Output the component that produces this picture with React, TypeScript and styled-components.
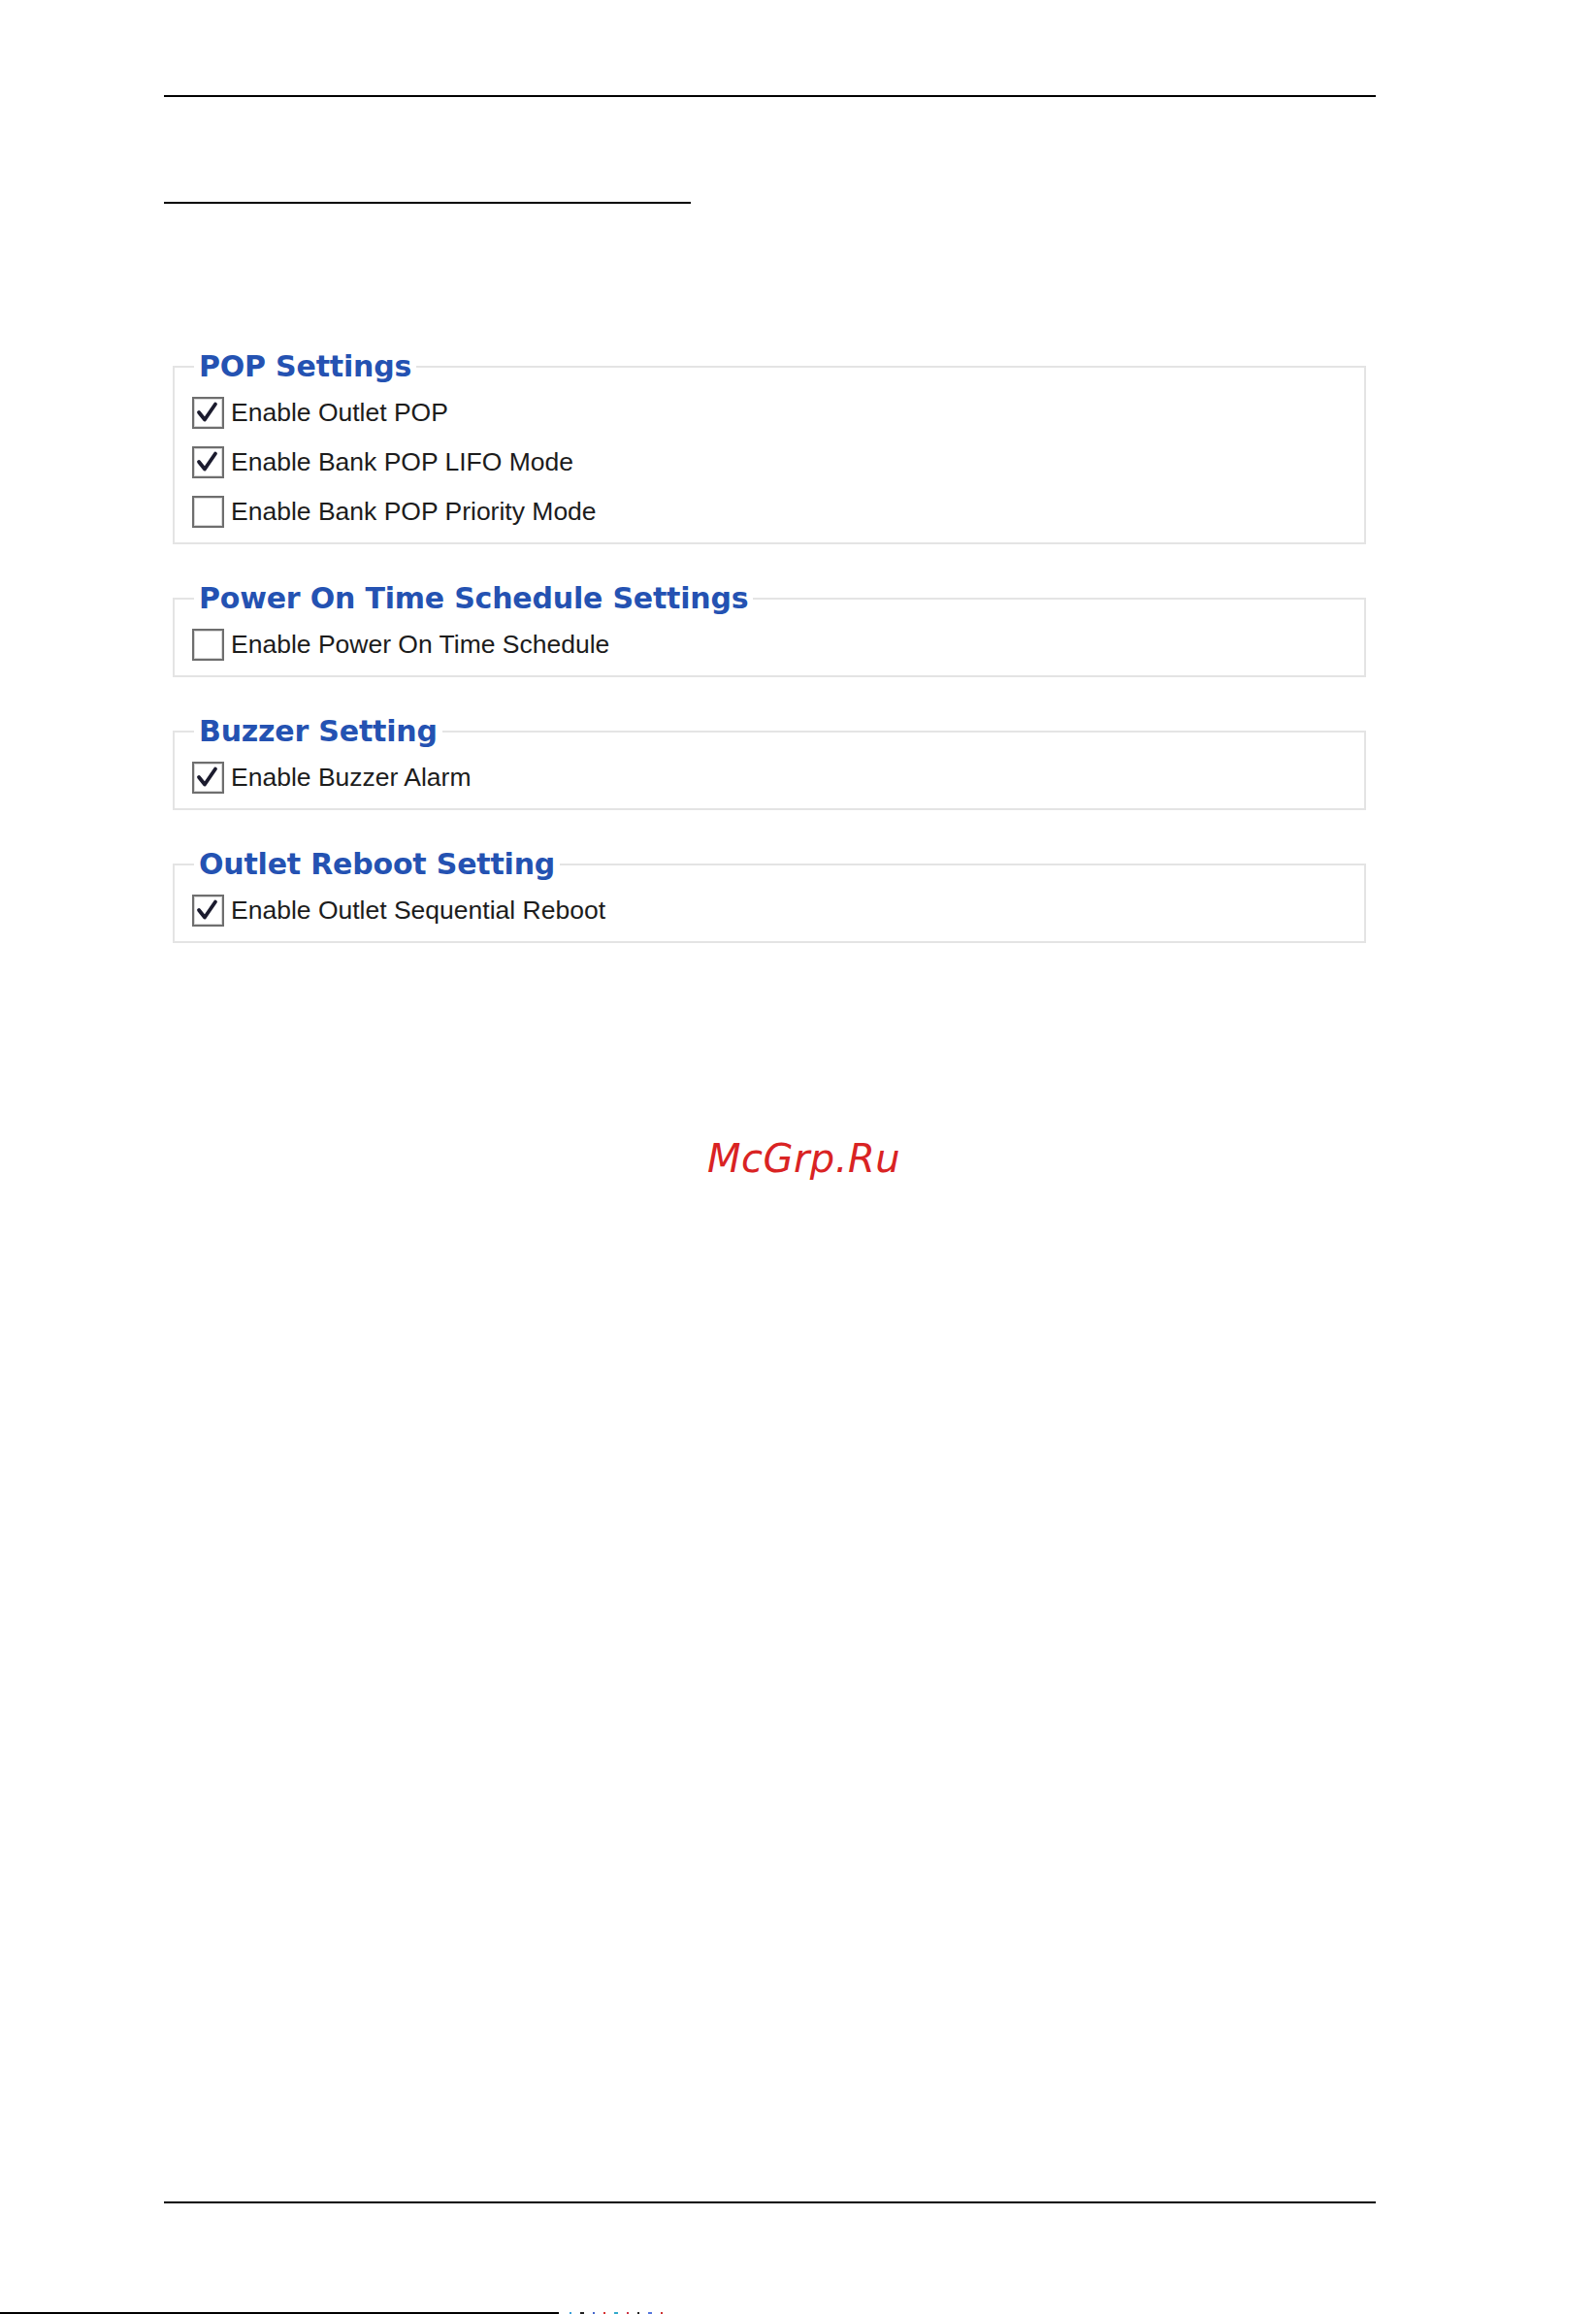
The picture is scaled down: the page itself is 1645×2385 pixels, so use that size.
import React from 'react';
import styled, { createGlobalStyle } from 'styled-components';

const GlobalStyle = createGlobalStyle`
  html, body {
    margin: 0;
    padding: 0;
    background: #ffffff;
  }
  body {
    font-family: "Liberation Sans", Arial, sans-serif;
  }
`;

const Page = styled.div`
  width: 1645px;
  height: 2385px;
  display: flex;
  flex-direction: column;
  box-sizing: border-box;
  padding-top: 98px;
  overflow: hidden;
`;

const Column = styled.div`
  width: 1249px;
  margin-left: 169px;
  display: flex;
  flex-direction: column;
`;

const Rule = styled.div<{ $width?: number }>`
  height: 2px;
  background: #000;
  width: ${p => (p.$width ? `${p.$width}px` : '100%')};
`;

const HeadingRule = styled(Rule)`
  margin-top: 108px;
`;

const Settings = styled.div`
  margin-top: 150px;
  display: flex;
  flex-direction: column;
  gap: 38px;
`;

const Group = styled.fieldset`
  margin: 0 10px 0 9px;
  border: 2px solid #e4e4e4;
  padding: 4px 18px 6px;
  min-width: 0;
`;

const Legend = styled.legend`
  margin-left: 2px;
  padding: 0 5px;
  font-family: "DejaVu Sans", Verdana, sans-serif;
  font-weight: bold;
  font-size: 30px;
  line-height: 36px;
  letter-spacing: -0.2px;
  color: #2452b2;
`;

const Row = styled.label`
  display: flex;
  align-items: center;
  gap: 7px;
  height: 51px;
  font-family: "Liberation Sans", Arial, sans-serif;
  font-size: 26.5px;
  color: #1c1c1c;
`;

const Box = styled.span`
  width: 33px;
  height: 33px;
  box-sizing: border-box;
  border: 2px solid #6e6e6e;
  box-shadow: inset 0 0 0 1px #d8d8d8;
  background: #fff;
  display: flex;
  align-items: center;
  justify-content: center;
  flex: none;
`;

const Watermark = styled.div`
  margin-top: 198px;
  padding-left: 12px;
  text-align: center;
  font-family: "DejaVu Sans", Verdana, sans-serif;
  font-style: oblique;
  font-size: 40px;
  line-height: 48px;
  color: #d92323;
  letter-spacing: 0.5px;
`;

const Footer = styled.div`
  margin-top: auto;
  display: flex;
  flex-direction: column;
`;

const FooterRule = styled(Rule)`
  width: 1249px;
  margin-left: 169px;
  margin-bottom: 112px;
`;

const Strip = styled.div`
  display: flex;
  align-items: flex-end;
  height: 2px;
  gap: 9px;
`;

const StripLine = styled.div`
  width: 576px;
  height: 2px;
  background: #000;
  margin-right: 2px;
`;

const Speck = styled.span<{ $color: string; $w?: number }>`
  width: ${p => p.$w ?? 2}px;
  height: 2px;
  background: ${p => p.$color};
`;

const Check: React.FC = () => (
  <svg width="27" height="27" viewBox="0 0 27 27">
    <polyline
      points="4,13 10,20.5 21,4.5"
      fill="none"
      stroke="#1b1b2e"
      strokeWidth="3.8"
      strokeLinecap="round"
      strokeLinejoin="round"
    />
  </svg>
);

interface Option {
  label: string;
  checked: boolean;
}

interface Section {
  title: string;
  options: Option[];
}

const sections: Section[] = [
  {
    title: 'POP Settings',
    options: [
      { label: 'Enable Outlet POP', checked: true },
      { label: 'Enable Bank POP LIFO Mode', checked: true },
      { label: 'Enable Bank POP Priority Mode', checked: false },
    ],
  },
  {
    title: 'Power On Time Schedule Settings',
    options: [{ label: 'Enable Power On Time Schedule', checked: false }],
  },
  {
    title: 'Buzzer Setting',
    options: [{ label: 'Enable Buzzer Alarm', checked: true }],
  },
  {
    title: 'Outlet Reboot Setting',
    options: [{ label: 'Enable Outlet Sequential Reboot', checked: true }],
  },
];

const specks = ['#3aa0d8', '#222', '#4466cc', '#d83030', '#33aacc', '#cc3344', '#222', '#5577dd', '#cc3333'];

const App: React.FC = () => {
  return (
    <>
      <GlobalStyle />
      <Page>
        <Column>
          <Rule />
          <HeadingRule $width={543} />
          <Settings>
            {sections.map(section => (
              <Group key={section.title}>
                <Legend>{section.title}</Legend>
                {section.options.map(opt => (
                  <Row key={opt.label}>
                    <Box>{opt.checked && <Check />}</Box>
                    {opt.label}
                  </Row>
                ))}
              </Group>
            ))}
          </Settings>
        </Column>
        <Watermark>McGrp.Ru</Watermark>
        <Footer>
          <FooterRule />
          <Strip>
            <StripLine />
            {specks.map((c, i) => (
              <Speck key={i} $color={c} $w={i % 3 === 1 ? 4 : 2} />
            ))}
          </Strip>
        </Footer>
      </Page>
    </>
  );
};

export default App;
